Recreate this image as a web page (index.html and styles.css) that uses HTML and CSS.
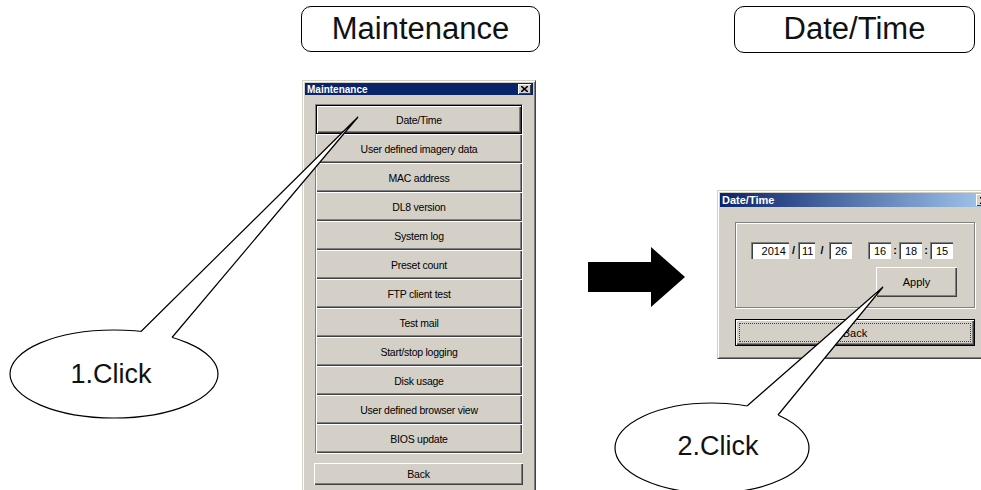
FILE: index.html
```html
<!DOCTYPE html>
<html lang="en">
<head>
    <meta charset="UTF-8">
    <title>Maintenance - Date/Time</title>
    <link rel="stylesheet" href="styles.css">
</head>
<body>
    <div class="canvas">
        <div class="tag tag-maint">Maintenance</div>
        <div class="tag tag-date">Date/Time</div>

        <!-- Maintenance dialog -->
        <div class="win win-maint">
            <div class="titlebar solid">
                <span class="title">Maintenance</span>
                <span class="close"><svg width="7" height="6" viewBox="0 0 7 6"><path d="M0 0L7 6M7 0L0 6" stroke="#000" stroke-width="1.6"/></svg></span>
            </div>
            <div class="maint-body">
                <div class="btn-list">
                    <div class="btn default">Date/Time</div>
                    <div class="btn">User defined imagery data</div>
                    <div class="btn">MAC address</div>
                    <div class="btn">DL8 version</div>
                    <div class="btn">System log</div>
                    <div class="btn">Preset count</div>
                    <div class="btn">FTP client test</div>
                    <div class="btn">Test mail</div>
                    <div class="btn">Start/stop logging</div>
                    <div class="btn">Disk usage</div>
                    <div class="btn">User defined browser view</div>
                    <div class="btn">BIOS update</div>
                </div>
                <div class="btn maint-back">Back</div>
            </div>
        </div>

        <!-- Date/Time dialog -->
        <div class="win win-date">
            <div class="titlebar gradient">
                <span class="title">Date/Time</span>
                <span class="close close-lg"><svg width="8" height="7" viewBox="0 0 8 7"><path d="M0 0L8 7M8 0L0 7" stroke="#000" stroke-width="1.6"/></svg></span>
            </div>
            <div class="date-body">
                <div class="group">
                    <div class="field-row">
                        <span class="field w-year right">2014</span>
                        <span class="sep s9">/</span>
                        <span class="field w-sm">11</span>
                        <span class="sep s14">/</span>
                        <span class="field">26</span>
                        <span class="gap"></span>
                        <span class="field">16</span>
                        <span class="sep s8">:</span>
                        <span class="field">18</span>
                        <span class="sep s8">:</span>
                        <span class="field">15</span>
                    </div>
                    <div class="apply-row">
                        <div class="btn apply">Apply</div>
                    </div>
                </div>
                <div class="btn default date-back"><span class="focus">Back</span></div>
            </div>
        </div>

        <svg class="overlay" width="981" height="490" viewBox="0 0 981 490">
            <polygon points="588,262 651,262 651,247 685,277 651,307 651,292 588,292" fill="#000"/>

            <ellipse cx="114" cy="374" rx="104" ry="44" fill="#fff" stroke="#000" stroke-width="1.2"/>
            <polygon points="138,337 141,331.5 358,117 172,337.5 175,343" fill="#fff"/>
            <path d="M141 331.5L358 117L172 337.5" fill="none" stroke="#000" stroke-width="1.2"/>
            <text x="111" y="383" class="bubble-text">1.Click</text>

            <ellipse cx="712" cy="448" rx="97" ry="45" fill="#fff" stroke="#000" stroke-width="1.2"/>
            <polygon points="744,411 747,406 883,287 778,415 781,420" fill="#fff"/>
            <path d="M747 406L883 287L778 415" fill="none" stroke="#000" stroke-width="1.2"/>
            <text x="718" y="455" class="bubble-text">2.Click</text>
        </svg>
    </div>
</body>
</html>
```

FILE: styles.css
```css
body {
    margin: 0;
    background: #fff;
    font-family: "Liberation Sans", Arial, sans-serif;
    overflow: hidden;
}
.canvas {
    position: relative;
    width: 981px;
    height: 490px;
    overflow: hidden;
}

/* labels above each dialog */
.tag {
    position: absolute;
    top: 6px;
    height: 46px;
    box-sizing: border-box;
    border: 1.5px solid #000;
    border-radius: 10px;
    font-size: 31px;
    line-height: 43px;
    text-align: center;
    color: #111;
}
.tag-maint {
    left: 301px;
    width: 239px;
}
.tag-date {
    left: 734px;
    width: 241px;
    height: 47px;
}

/* classic windows */
.win {
    position: absolute;
    box-sizing: border-box;
    background: #d4d0c8;
    border: 1px solid;
    border-color: #d4d0c8 #404040 #404040 #d4d0c8;
    box-shadow: inset 1px 1px #fff, inset -1px -1px #808080;
    padding: 2px;
}
.win-maint {
    left: 302px;
    top: 80px;
    width: 234px;
    height: 420px;
}
.win-date {
    left: 717px;
    top: 190px;
    width: 280px;
    height: 169px;
}
.titlebar {
    display: flex;
    align-items: center;
    justify-content: space-between;
    color: #fff;
    font-weight: bold;
    padding: 0 2px 0 2px;
}
.titlebar.solid {
    height: 12px;
    background: #0a246a;
    font-size: 10px;
}
.titlebar.gradient {
    height: 14px;
    background: linear-gradient(to right, #0a246a, #a6caf0);
    font-size: 11px;
}
.close {
    display: flex;
    align-items: center;
    justify-content: center;
    width: 13px;
    height: 10px;
    background: #d4d0c8;
    box-shadow: inset 1px 1px #fff, inset -1px -1px #404040;
}
.close-lg {
    width: 16px;
    height: 12px;
}

/* buttons */
.btn {
    box-sizing: border-box;
    display: flex;
    align-items: center;
    justify-content: center;
    background: #d4d0c8;
    color: #000;
    box-shadow: inset 1px 1px #fff, inset -1px -1px #404040, inset -2px -2px #808080;
}
.btn.default {
    border: 1px solid #000;
}

/* maintenance body */
.maint-body {
    padding: 9px 10px 0 10px;
    font-size: 10.5px;
    letter-spacing: -0.25px;
}
.btn-list {
    display: flex;
    flex-direction: column;
    border: 1px solid;
    border-color: #808080 #fff #fff #808080;
}
.btn-list .btn {
    height: 29px;
}
.maint-back {
    margin-top: 9px;
    margin-left: -1px;
    width: 209px;
    height: 22px;
}

/* date/time body */
.date-body {
    padding: 15px 19px 0 15px;
    font-size: 11px;
}
.group {
    height: 86px;
    box-sizing: border-box;
    border: 1px solid #808080;
    box-shadow: inset 1px 1px #fff, 1px 1px #fff;
    padding: 19px 17px 0 15px;
}
.field-row {
    display: flex;
    height: 17px;
}
.field {
    box-sizing: border-box;
    width: 23px;
    height: 17px;
    background: #fff;
    border-top: 1px solid #808080;
    border-left: 1px solid #808080;
    box-shadow: inset 1px 1px #404040;
    padding: 2px 0 0 5px;
    font-size: 11px;
    line-height: 13px;
}
.field.w-year {
    width: 38px;
}
.field.w-sm {
    width: 17px;
    padding-left: 3px;
}
.field.right {
    text-align: right;
    padding-right: 3px;
}
.sep {
    text-align: center;
    font-weight: bold;
    line-height: 17px;
}
.s9 { width: 9px; }
.s14 { width: 14px; }
.s8 { width: 8px; }
.gap { width: 16px; }
.apply-row {
    display: flex;
    justify-content: flex-end;
    margin-top: 8px;
}
.apply {
    width: 81px;
    height: 30px;
}
.date-back {
    margin-top: 11px;
    width: 240px;
    height: 27px;
    padding: 3px;
}
.date-back .focus {
    flex: 1;
    align-self: stretch;
    display: flex;
    align-items: center;
    justify-content: center;
    border: 1px dotted #404040;
}

/* arrow and callouts */
.overlay {
    position: absolute;
    left: 0;
    top: 0;
}
.bubble-text {
    font-family: "Liberation Sans", Arial, sans-serif;
    font-size: 27px;
    text-anchor: middle;
    fill: #111;
}
```
